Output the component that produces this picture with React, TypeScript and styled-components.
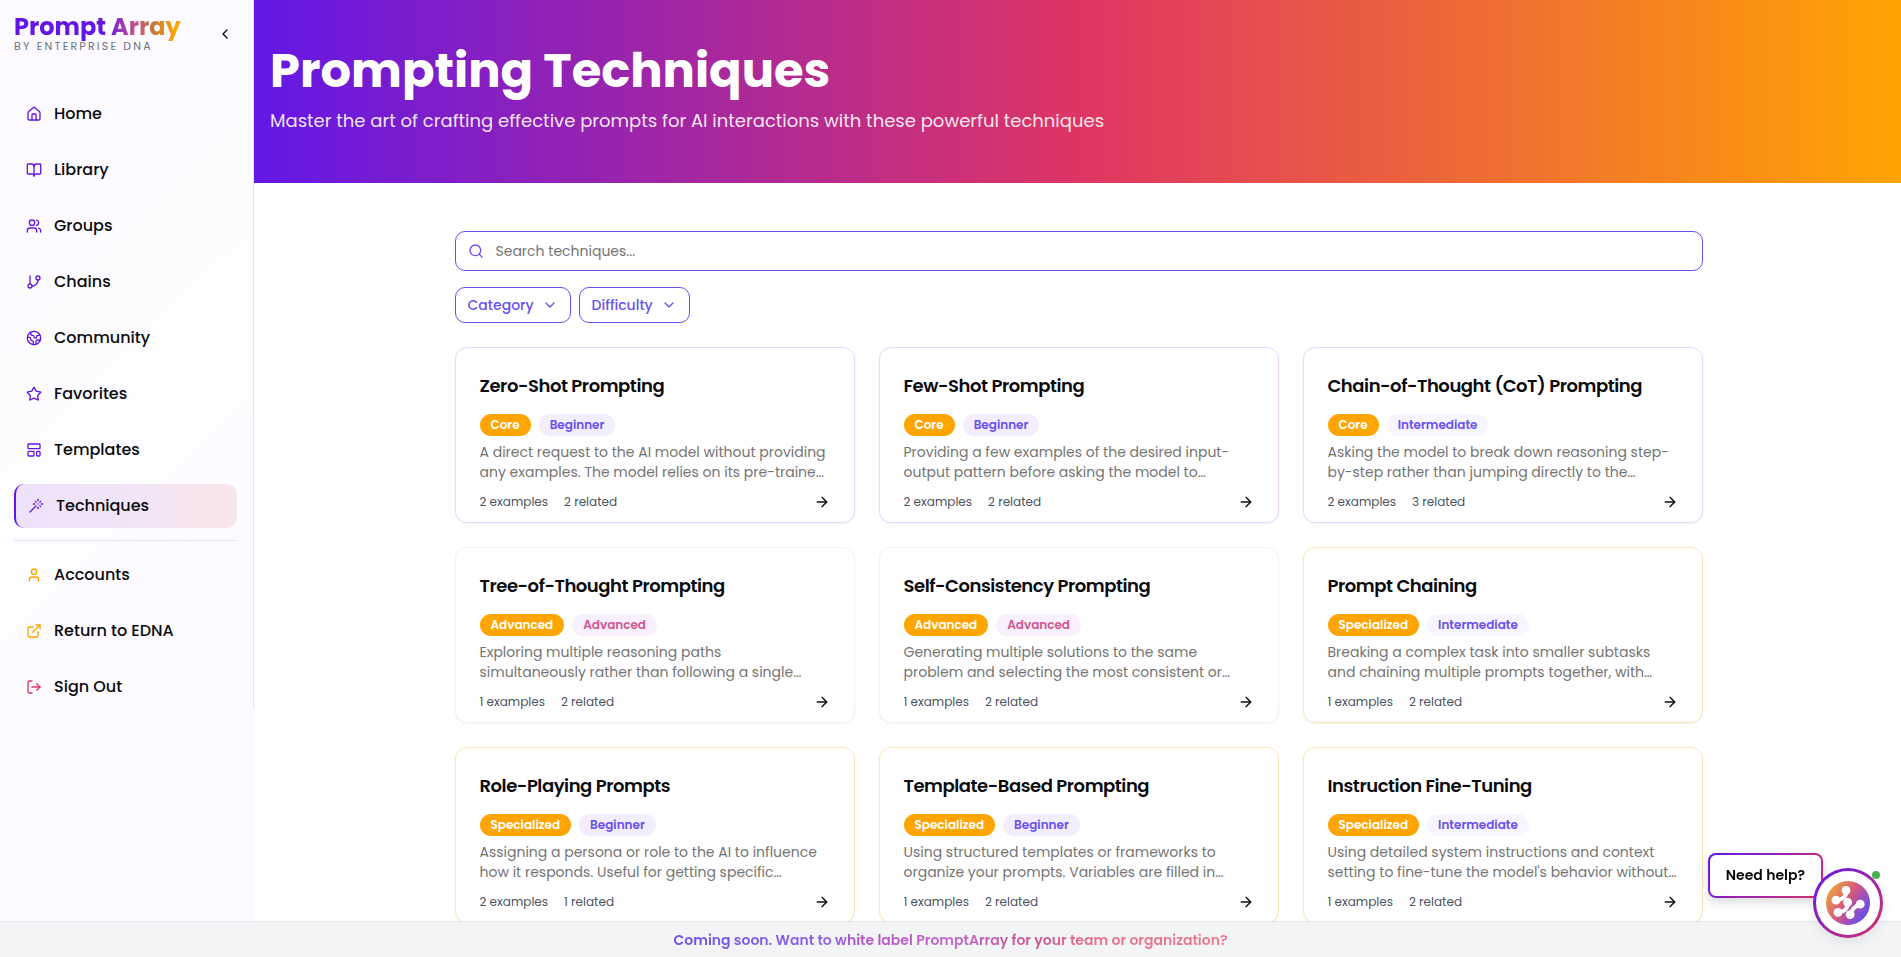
import React from 'react';
import styled, { createGlobalStyle } from 'styled-components';
import {
  ArrowRight,
  BookOpen,
  ChevronDown,
  ChevronLeft,
  Earth,
  ExternalLink,
  GitBranch,
  House,
  LayoutTemplate,
  LogOut,
  Search,
  Star,
  User,
  Users,
  Wand,
  type LucideIcon,
} from 'lucide-react';

const color = {
  purple: '#6317e6',
  indigo: '#6a4ff0',
  pink: '#de3564',
  orange: '#ffa502',
  ink: '#0b0b0f',
  muted: '#757575',
  line: '#e5e7eb',
};

const GlobalStyle = createGlobalStyle`
  *, *::before, *::after { box-sizing: border-box; }
  body {
    margin: 0;
    background: #ffffff;
    color: ${color.ink};
    font-family: Poppins, Inter, "Open Sans", sans-serif;
    font-size: 16px;
  }
  h1, h2, p, ul { margin: 0; padding: 0; }
  ul { list-style: none; }
  button, input { font-family: inherit; }
  a { color: inherit; text-decoration: none; }
`;

const Page = styled.div`
  display: grid;
  grid-template-columns: 254px minmax(0, 1fr);
  min-height: 100vh;
`;

/* ---------- Sidebar ---------- */

const Sidebar = styled.aside`
  background: #fcfaff;
`;

const SidebarPanel = styled.div`
  border-right: 1px solid ${color.line};
  background: linear-gradient(135deg, #fcf9ff, #fdfdff 50%, #fdfaff);
  padding: 12px 16px 0 14px;
`;

const SidebarHeader = styled.div`
  display: flex;
  align-items: center;
  justify-content: space-between;
  height: 44px;
  margin-bottom: 36px;
`;

const Brand = styled.div`
  display: flex;
  flex-direction: column;
  align-self: flex-start;
`;

const BrandName = styled.span`
  font-size: 24px;
  font-weight: 700;
  line-height: 29px;
  color: transparent;
  background: linear-gradient(90deg, ${color.purple} 55%, #c2508f 72%, #c4743f 82%, ${color.orange} 97%);
  background-clip: text;
  -webkit-background-clip: text;
`;

const BrandTagline = styled.span`
  font-size: 11px;
  line-height: 10px;
  letter-spacing: 0.2em;
  color: #6b7280;
`;

const CollapseButton = styled.button`
  display: flex;
  padding: 4px;
  border: 0;
  background: none;
  color: ${color.ink};
  cursor: pointer;
`;

const NavList = styled.ul`
  display: flex;
  flex-direction: column;
  gap: 12px;
`;

const NavLink = styled.a<{ $active?: boolean; $tint: string }>`
  display: flex;
  align-items: center;
  gap: 12px;
  height: 44px;
  padding: 0 12px;
  border-radius: 10px;
  font-weight: 500;
  line-height: 24px;
  border-left: ${(p) => (p.$active ? `2px solid ${color.purple}` : '0')};
  background: ${(p) =>
    p.$active ? 'linear-gradient(90deg, #eee2fb, #f1e5f8 50%, #f8e6ed 85%)' : 'none'};

  svg {
    color: ${(p) => p.$tint};
  }
`;

const NavDivider = styled.li`
  height: 1px;
  background: #e2e8f0;
`;

/* ---------- Main column ---------- */

const Banner = styled.header`
  padding: 48px 16px;
  background: linear-gradient(90deg, ${color.purple}, ${color.pink} 50%, ${color.orange});
  color: #ffffff;
`;

const BannerTitle = styled.h1`
  font-size: 48px;
  font-weight: 700;
  line-height: 46px;
  margin-bottom: 13px;
`;

const BannerText = styled.p`
  font-size: 18px;
  line-height: 28px;
  color: rgba(255, 255, 255, 0.9);
`;

const Content = styled.div`
  max-width: 1282px;
  margin: 0 auto;
  padding: 48px 16px 32px 18px;
`;

const SearchField = styled.label`
  display: flex;
  align-items: center;
  gap: 12px;
  height: 40px;
  padding: 0 12px;
  margin-bottom: 16px;
  border: 1px solid ${color.indigo};
  border-radius: 10px;
  color: ${color.indigo};
`;

const SearchInput = styled.input`
  flex: 1;
  min-width: 0;
  padding: 0;
  border: 0;
  outline: 0;
  background: none;
  font-size: 14px;
  line-height: 20px;
  color: ${color.ink};

  &::placeholder {
    color: ${color.muted};
    opacity: 1;
  }
`;

const Filters = styled.div`
  display: flex;
  gap: 8px;
  margin-bottom: 24px;
`;

const FilterButton = styled.button`
  display: flex;
  align-items: center;
  gap: 8px;
  height: 36px;
  padding: 0 12px;
  border: 1px solid ${color.indigo};
  border-radius: 10px;
  background: #ffffff;
  color: ${color.indigo};
  font-size: 14px;
  font-weight: 500;
  line-height: 20px;
  cursor: pointer;
`;

const CardGrid = styled.div`
  display: grid;
  grid-template-columns: repeat(3, minmax(0, 1fr));
  gap: 24px;
`;

type Category = 'Core' | 'Advanced' | 'Specialized';
type Level = 'Beginner' | 'Intermediate' | 'Advanced';

const cardBorder: Record<Category, string> = {
  Core: '#e9d5ff',
  Advanced: '#f3f0fd',
  Specialized: '#fde6b8',
};

const levelStyle: Record<Level, { bg: string; fg: string }> = {
  Beginner: { bg: '#f2eefe', fg: '#6a4ff0' },
  Intermediate: { bg: '#f7f5ff', fg: '#6a4ff0' },
  Advanced: { bg: '#f9f0fd', fg: '#cf5590' },
};

const Card = styled.article<{ $category: Category }>`
  padding: 24px 24px 12px;
  border: 1px solid ${(p) => cardBorder[p.$category]};
  border-radius: 12px;
  background: #ffffff;
  box-shadow: 0 1px 2px rgba(0, 0, 0, 0.05);
`;

const CardTitle = styled.h2`
  font-size: 18px;
  font-weight: 600;
  line-height: 28px;
  letter-spacing: -0.025em;
  margin-bottom: 14px;
`;

const Badges = styled.div`
  display: flex;
  gap: 8px;
  margin-bottom: 6px;
`;

const Badge = styled.span<{ $bg: string; $fg: string }>`
  padding: 3px 11px;
  border-radius: 11px;
  background: ${(p) => p.$bg};
  color: ${(p) => p.$fg};
  font-size: 12px;
  font-weight: 600;
  line-height: 16px;
`;

const CardText = styled.p`
  height: 40px;
  margin-bottom: 12px;
  font-size: 14px;
  line-height: 20px;
  white-space: pre-line;
  color: ${color.muted};
`;

const CardFooter = styled.div`
  display: flex;
  align-items: center;
  gap: 16px;
  font-size: 12px;
  line-height: 16px;
  color: #4b5563;
`;

const OpenButton = styled.button`
  display: flex;
  margin-left: auto;
  padding: 0;
  border: 0;
  background: none;
  color: ${color.ink};
  cursor: pointer;
`;

/* ---------- Fixed overlays ---------- */

const PromoBar = styled.footer`
  position: fixed;
  left: 0;
  right: 0;
  bottom: 0;
  display: flex;
  justify-content: center;
  padding: 8px 16px 7px;
  border-top: 1px solid ${color.line};
  background: #f3f4f6;
`;

const PromoLink = styled.a`
  font-size: 14px;
  font-weight: 600;
  line-height: 20px;
  color: transparent;
  background: linear-gradient(90deg, #6a50f2, #8f62e8 27%, #b455c4 35%, #bf69c8 50%, #cc5595 66%, #e66f88 75%, #e77b8c);
  background-clip: text;
  -webkit-background-clip: text;
`;

const HelpWidget = styled.div`
  position: fixed;
  right: 18px;
  bottom: 19px;
  display: flex;
  align-items: flex-start;
`;

const HelpBubble = styled.div`
  margin: -15px -10px 0 0;
  padding: 10px 16px 11px;
  border: 2px solid transparent;
  border-radius: 8px;
  background:
    linear-gradient(#ffffff, #ffffff) padding-box,
    linear-gradient(135deg, ${color.purple}, #d6336c) border-box;
  box-shadow: 0 4px 12px rgba(0, 0, 0, 0.15);
  font-size: 14px;
  font-weight: 600;
  line-height: 20px;
`;

const HelpButton = styled.button`
  position: relative;
  display: flex;
  align-items: center;
  justify-content: center;
  width: 70px;
  height: 70px;
  padding: 0;
  border: 3px solid transparent;
  border-radius: 50%;
  background:
    linear-gradient(#ffffff, #ffffff) padding-box,
    linear-gradient(135deg, ${color.purple}, #d6336c) border-box;
  box-shadow: 0 4px 12px rgba(0, 0, 0, 0.08);
  cursor: pointer;
`;

const StatusDot = styled.span`
  position: absolute;
  top: 0;
  right: 0;
  width: 8px;
  height: 8px;
  border-radius: 50%;
  background: #4caf50;
`;

/* ---------- Data ---------- */

type NavItem = { label: string; icon: LucideIcon; tint: string; active?: boolean };

const primaryNav: NavItem[] = [
  { label: 'Home', icon: House, tint: color.purple },
  { label: 'Library', icon: BookOpen, tint: color.purple },
  { label: 'Groups', icon: Users, tint: color.purple },
  { label: 'Chains', icon: GitBranch, tint: color.purple },
  { label: 'Community', icon: Earth, tint: color.purple },
  { label: 'Favorites', icon: Star, tint: color.purple },
  { label: 'Templates', icon: LayoutTemplate, tint: color.purple },
  { label: 'Techniques', icon: Wand, tint: color.purple, active: true },
];

const accountNav: NavItem[] = [
  { label: 'Accounts', icon: User, tint: color.orange },
  { label: 'Return to EDNA', icon: ExternalLink, tint: color.orange },
  { label: 'Sign Out', icon: LogOut, tint: color.pink },
];

type Technique = {
  title: string;
  category: Category;
  level: Level;
  text: string;
  examples: number;
  related: number;
};

const techniques: Technique[] = [
  {
    title: 'Zero-Shot Prompting',
    category: 'Core',
    level: 'Beginner',
    text: 'A direct request to the AI model without providing\nany examples. The model relies on its pre-traine…',
    examples: 2,
    related: 2,
  },
  {
    title: 'Few-Shot Prompting',
    category: 'Core',
    level: 'Beginner',
    text: 'Providing a few examples of the desired input-\noutput pattern before asking the model to…',
    examples: 2,
    related: 2,
  },
  {
    title: 'Chain-of-Thought (CoT) Prompting',
    category: 'Core',
    level: 'Intermediate',
    text: 'Asking the model to break down reasoning step-\nby-step rather than jumping directly to the…',
    examples: 2,
    related: 3,
  },
  {
    title: 'Tree-of-Thought Prompting',
    category: 'Advanced',
    level: 'Advanced',
    text: 'Exploring multiple reasoning paths\nsimultaneously rather than following a single…',
    examples: 1,
    related: 2,
  },
  {
    title: 'Self-Consistency Prompting',
    category: 'Advanced',
    level: 'Advanced',
    text: 'Generating multiple solutions to the same\nproblem and selecting the most consistent or…',
    examples: 1,
    related: 2,
  },
  {
    title: 'Prompt Chaining',
    category: 'Specialized',
    level: 'Intermediate',
    text: 'Breaking a complex task into smaller subtasks\nand chaining multiple prompts together, with…',
    examples: 1,
    related: 2,
  },
  {
    title: 'Role-Playing Prompts',
    category: 'Specialized',
    level: 'Beginner',
    text: 'Assigning a persona or role to the AI to influence\nhow it responds. Useful for getting specific…',
    examples: 2,
    related: 1,
  },
  {
    title: 'Template-Based Prompting',
    category: 'Specialized',
    level: 'Beginner',
    text: 'Using structured templates or frameworks to\norganize your prompts. Variables are filled in…',
    examples: 1,
    related: 2,
  },
  {
    title: 'Instruction Fine-Tuning',
    category: 'Specialized',
    level: 'Intermediate',
    text: "Using detailed system instructions and context\nsetting to fine-tune the model's behavior without…",
    examples: 1,
    related: 2,
  },
];

/* ---------- Components ---------- */

function NavEntry({ item }: { item: NavItem }) {
  const Icon = item.icon;
  return (
    <li>
      <NavLink href="#" $active={item.active} $tint={item.tint} aria-current={item.active ? 'page' : undefined}>
        <Icon size={16} aria-hidden />
        {item.label}
      </NavLink>
    </li>
  );
}

function TechniqueCard({ item }: { item: Technique }) {
  const level = levelStyle[item.level];
  return (
    <Card $category={item.category}>
      <CardTitle>{item.title}</CardTitle>
      <Badges>
        <Badge $bg={color.orange} $fg="#ffffff">{item.category}</Badge>
        <Badge $bg={level.bg} $fg={level.fg}>{item.level}</Badge>
      </Badges>
      <CardText>{item.text}</CardText>
      <CardFooter>
        <span>{item.examples} examples</span>
        <span>{item.related} related</span>
        <OpenButton aria-label={`Open ${item.title}`}>
          <ArrowRight size={16} aria-hidden />
        </OpenButton>
      </CardFooter>
    </Card>
  );
}

function DnaLogo() {
  return (
    <svg width="44" height="44" viewBox="0 0 44 44" aria-hidden>
      <defs>
        <linearGradient id="dna" x1="2" y1="10" x2="42" y2="36" gradientUnits="userSpaceOnUse">
          <stop offset="0" stopColor="#eba43c" />
          <stop offset="0.45" stopColor="#d4577f" />
          <stop offset="0.65" stopColor="#a851b4" />
          <stop offset="1" stopColor="#5a4cf8" />
        </linearGradient>
      </defs>
      <circle cx="22" cy="22" r="22" fill="url(#dna)" />
      <g fill="#ffffff">
        <circle cx="20" cy="9.4" r="4.4" />
        <circle cx="10" cy="19.2" r="4.4" />
        <circle cx="21.6" cy="21.4" r="4.4" />
        <circle cx="12" cy="31.4" r="4.4" />
        <circle cx="34.2" cy="23.2" r="4.4" />
        <circle cx="24.2" cy="33.6" r="4.4" />
      </g>
      <g fill="none" stroke="#ffffff" strokeWidth="4">
        <path d="M21 9.4C20 16 17 18.4 10 19.2" />
        <path d="M22.6 21.4C21 28.4 19 30.4 12 31.6" />
        <path d="M34.2 23.6C28 25.6 26.4 27.4 24.8 33.6" />
      </g>
    </svg>
  );
}

export default function App() {
  return (
    <>
      <GlobalStyle />
      <Page>
        <Sidebar>
          <SidebarPanel>
            <SidebarHeader>
              <Brand>
                <BrandName>Prompt Array</BrandName>
                <BrandTagline>BY ENTERPRISE DNA</BrandTagline>
              </Brand>
              <CollapseButton aria-label="Collapse sidebar">
                <ChevronLeft size={16} aria-hidden />
              </CollapseButton>
            </SidebarHeader>
            <nav aria-label="Main">
              <NavList>
                {primaryNav.map((item) => (
                  <NavEntry key={item.label} item={item} />
                ))}
                <NavDivider role="separator" />
                {accountNav.map((item) => (
                  <NavEntry key={item.label} item={item} />
                ))}
              </NavList>
            </nav>
          </SidebarPanel>
        </Sidebar>

        <main>
          <Banner>
            <BannerTitle>Prompting Techniques</BannerTitle>
            <BannerText>
              Master the art of crafting effective prompts for AI interactions with these powerful techniques
            </BannerText>
          </Banner>
          <Content>
            <SearchField>
              <Search size={16} aria-hidden />
              <SearchInput type="text" placeholder="Search techniques..." aria-label="Search techniques" />
            </SearchField>
            <Filters>
              <FilterButton aria-haspopup="menu">
                Category
                <ChevronDown size={16} aria-hidden />
              </FilterButton>
              <FilterButton aria-haspopup="menu">
                Difficulty
                <ChevronDown size={16} aria-hidden />
              </FilterButton>
            </Filters>
            <CardGrid>
              {techniques.map((item) => (
                <TechniqueCard key={item.title} item={item} />
              ))}
            </CardGrid>
          </Content>
        </main>
      </Page>

      <PromoBar>
        <PromoLink href="#">
          Coming soon. Want to white label PromptArray for your team or organization?
        </PromoLink>
      </PromoBar>

      <HelpWidget>
        <HelpBubble>Need help?</HelpBubble>
        <HelpButton aria-label="Open help chat">
          <DnaLogo />
          <StatusDot />
        </HelpButton>
      </HelpWidget>
    </>
  );
}
